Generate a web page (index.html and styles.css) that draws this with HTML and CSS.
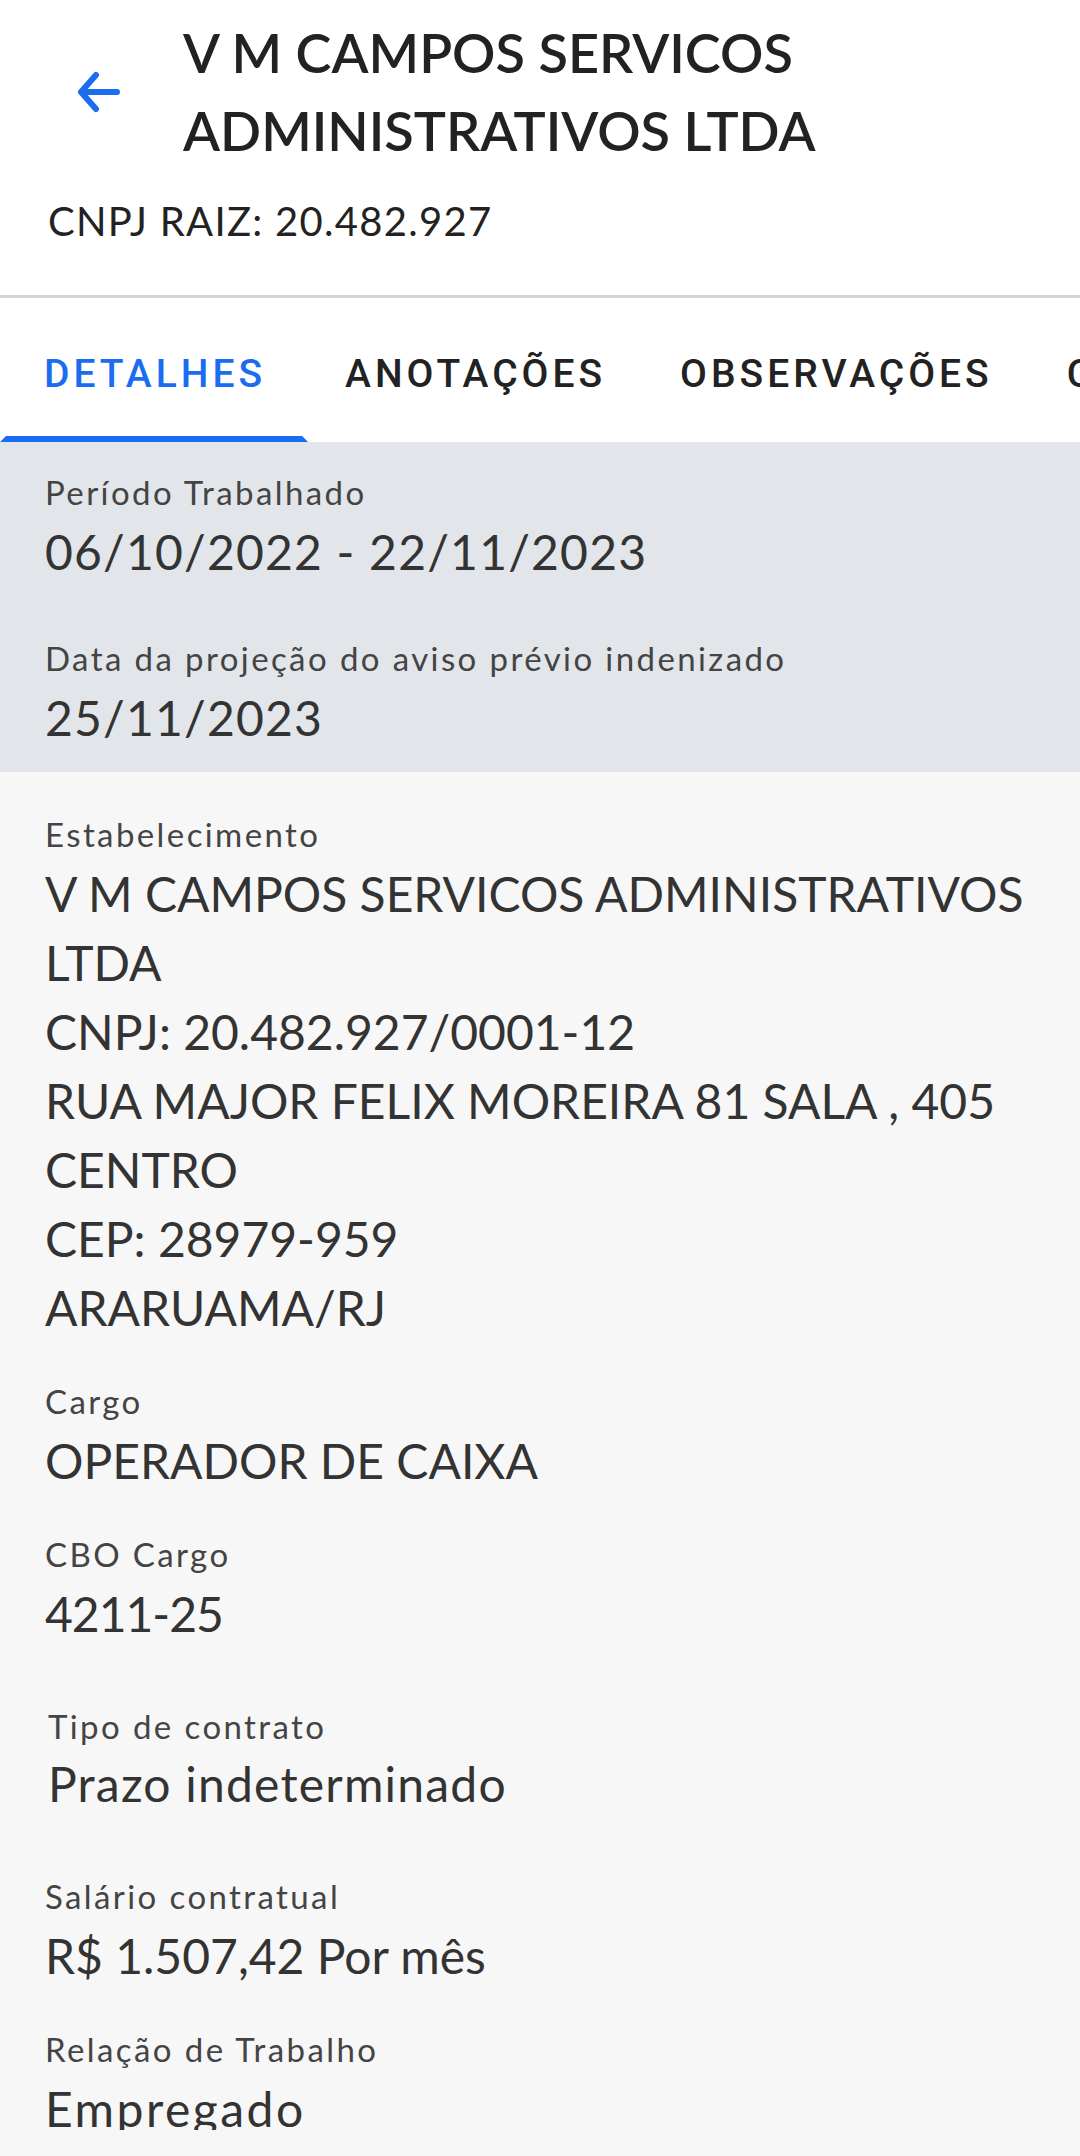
FILE: index.html
```html
<!DOCTYPE html>
<html>
<head>
    <title>Detalhes do vínculo</title>
    <link rel="stylesheet" href="styles.css">
</head>
<body>

<div class="header">
    <div class="top-row">
        <div class="back">
            <svg width="44" height="44" viewBox="0 0 44 44">
                <path d="M40 22 H6 M19 5 L4 22 L19 39" fill="none" stroke="#1a6cf0" stroke-width="6" stroke-linecap="round" stroke-linejoin="round"/>
            </svg>
        </div>
        <h1 class="title">V M CAMPOS SERVICOS ADMINISTRATIVOS LTDA</h1>
    </div>
    <div class="cnpj-raiz">CNPJ RAIZ: 20.482.927</div>
</div>

<div class="tabs">
    <div class="tab active">DETALHES</div>
    <div class="tab">ANOTAÇÕES</div>
    <div class="tab">OBSERVAÇÕES</div>
    <div class="tab">CONTRIBUIÇÕES</div>
</div>

<div class="content">
    <div class="summary">
        <div class="field">
            <div class="label">Período Trabalhado</div>
            <div class="value spaced">06/10/2022 - 22/11/2023</div>
        </div>
        <div class="field">
            <div class="label">Data da projeção do aviso prévio indenizado</div>
            <div class="value spaced">25/11/2023</div>
        </div>
    </div>

    <div class="details">
        <div class="field">
            <div class="label">Estabelecimento</div>
            <div class="value">V M CAMPOS SERVICOS ADMINISTRATIVOS LTDA<br>
                CNPJ: 20.482.927/0001-12<br>
                RUA MAJOR FELIX MOREIRA 81 SALA , 405<br>
                CENTRO<br>
                CEP: 28979-959<br>
                ARARUAMA/RJ</div>
        </div>
        <div class="field">
            <div class="label">Cargo</div>
            <div class="value">OPERADOR DE CAIXA</div>
        </div>
        <div class="field">
            <div class="label">CBO Cargo</div>
            <div class="value narrow">4211-25</div>
        </div>
        <div class="field wide">
            <div class="label">Tipo de contrato</div>
            <div class="value spaced">Prazo indeterminado</div>
        </div>
        <div class="field wide-top">
            <div class="label">Salário contratual</div>
            <div class="value">R$ 1.507,42 Por mês</div>
        </div>
        <div class="field">
            <div class="label">Relação de Trabalho</div>
            <div class="value extra-spaced">Empregado</div>
        </div>
    </div>
</div>

</body>
</html>
```

FILE: styles.css
```css
body {
    margin: 0;
    font-family: Lato, "Open Sans", sans-serif;
    background-color: #f6f6f6;
    color: #333;
}
.header {
    background: #fff;
    padding: 14px 48px 50px 48px;
    border-bottom: 3px solid #d4d4d4;
}
.top-row {
    display: flex;
    align-items: center;
}
.back {
    width: 135px;
    flex-shrink: 0;
}
.back svg {
    display: block;
    margin-left: 29px;
}
.title {
    margin: 0;
    font-size: 54px;
    line-height: 78px;
    font-weight: 600;
    color: #222;
}
.cnpj-raiz {
    margin-top: 27px;
    font-size: 40px;
    line-height: 48px;
    letter-spacing: 1.3px;
    color: #222;
}
/* Tabs */
.tabs {
    display: flex;
    height: 144px;
    background: #fff;
    overflow: hidden;
    white-space: nowrap;
}
.tab {
    position: relative;
    display: flex;
    align-items: center;
    padding: 8px 37px 0 37px;
    font-family: Roboto, sans-serif;
    font-weight: 500;
    font-size: 39px;
    letter-spacing: 4px;
    color: #222;
}
.tab.active {
    padding-left: 44px;
    padding-right: 42px;
    color: #1a6cf0;
}
.tab.active::after {
    content: "";
    position: absolute;
    left: 0;
    right: 0;
    bottom: 0;
    height: 6px;
    background: #1a6cf0;
    clip-path: polygon(6px 0, calc(100% - 6px) 0, 100% 100%, 0 100%);
}
/* Content */
.content {
    height: 1688px;
    overflow: hidden;
}
.summary {
    background: #e2e5e9;
    padding: 28px 45px 20px 45px;
    display: flex;
    flex-direction: column;
    gap: 50px;
}
.details {
    background: #f7f7f7;
    padding: 40px 45px 0 45px;
    height: 1358px;
    box-sizing: border-box;
    overflow: hidden;
    display: flex;
    flex-direction: column;
    gap: 37px;
}
.label {
    font-size: 33px;
    line-height: 44px;
    letter-spacing: 2.4px;
    color: #444;
}
.value {
    margin-top: 3px;
    font-size: 48px;
    line-height: 69px;
    color: #333;
}
.value.spaced {
    letter-spacing: 1.2px;
}
.value.extra-spaced {
    letter-spacing: 2.5px;
}
.value.narrow {
    letter-spacing: -1px;
}
.field.wide {
    margin-top: 19px;
    padding-left: 3px;
}
.field.wide .value {
    margin-top: 1px;
}
.field.wide-top {
    margin-top: 19px;
}
```
